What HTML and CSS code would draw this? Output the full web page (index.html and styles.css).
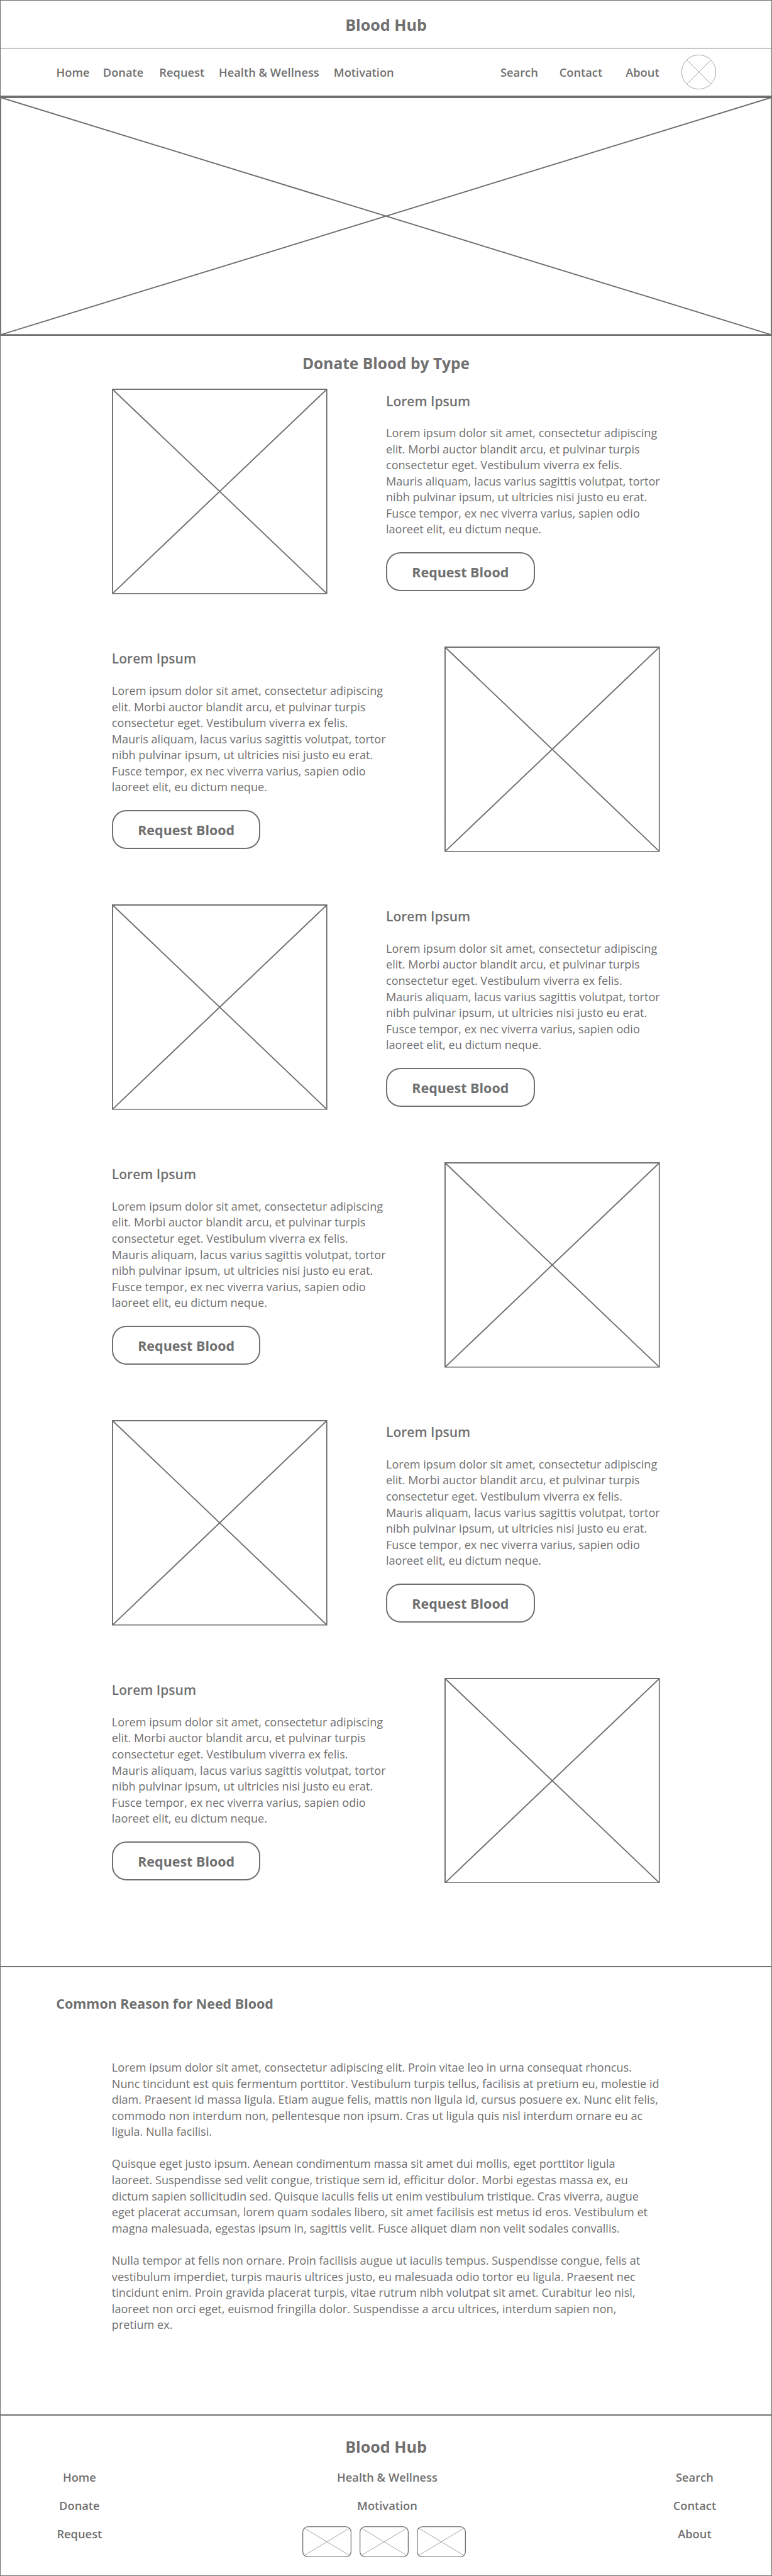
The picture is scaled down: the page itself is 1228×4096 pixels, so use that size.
FILE: index.html
```html
<!DOCTYPE html>
<html lang="en">
<head>
<meta charset="utf-8">
<title>Blood Hub</title>
<link rel="stylesheet" href="styles.css">
</head>
<body>
<svg class="defs" aria-hidden="true">
  <symbol id="picture" viewBox="0 0 536 511">
    <path d="M1.5 1.5H534.5V509.5H1.5ZL534.5 509.5M534.5 1.5L1.5 509.5" fill="none" stroke="#707070" stroke-width="3"/>
  </symbol>
  <symbol id="tile" viewBox="0 0 122 77">
    <rect x="1" y="1" width="120" height="75" rx="13" fill="none" stroke="#707070" stroke-width="2"/>
    <path d="M4.500 4.500L117.500 72.500M117.500 4.500L4.500 72.500" fill="none" stroke="#707070" stroke-width="1"/>
  </symbol>
</svg>
<div class="page">
  <header class="brand-bar"><h1 class="brand">Blood Hub</h1></header>
  <nav class="nav">
    <a>Home</a><a>Donate</a><a>Request</a><a>Health &amp; Wellness</a><a>Motivation</a><a>Search</a><a>Contact</a><a>About</a>
    <svg class="avatar" viewBox="0 0 86 86"><g fill="none" stroke="#707070" stroke-width="1"><circle cx="43" cy="43" r="42.5"/><path d="M13 13L73 73M73 13L13 73"/></g></svg>
  </nav>
  <svg class="hero" viewBox="0 0 1920 593" preserveAspectRatio="none"><path d="M1.500 1.500H1918.500V591.500H1.500ZL1918.500 591.500M1918.500 1.500L1.500 591.500" fill="none" stroke="#707070" stroke-width="3"/></svg>

  <main class="types">
    <h2 class="types-title">Donate Blood by Type</h2>
    <section class="row">
      <svg class="picture"><use href="#picture"/></svg>
      <div class="copy">
        <h3>Lorem Ipsum</h3>
        <p>Lorem ipsum dolor sit amet, consectetur adipiscing<br>elit. Morbi auctor blandit arcu, et pulvinar turpis<br>consectetur eget. Vestibulum viverra ex felis.<br>Mauris aliquam, lacus varius sagittis volutpat, tortor<br>nibh pulvinar ipsum, ut ultricies nisi justo eu erat.<br>Fusce tempor, ex nec viverra varius, sapien odio<br>laoreet elit, eu dictum neque.</p>
        <a class="button">Request Blood</a>
      </div>
    </section>
    <section class="row flip">
      <svg class="picture"><use href="#picture"/></svg>
      <div class="copy">
        <h3>Lorem Ipsum</h3>
        <p>Lorem ipsum dolor sit amet, consectetur adipiscing<br>elit. Morbi auctor blandit arcu, et pulvinar turpis<br>consectetur eget. Vestibulum viverra ex felis.<br>Mauris aliquam, lacus varius sagittis volutpat, tortor<br>nibh pulvinar ipsum, ut ultricies nisi justo eu erat.<br>Fusce tempor, ex nec viverra varius, sapien odio<br>laoreet elit, eu dictum neque.</p>
        <a class="button">Request Blood</a>
      </div>
    </section>
    <section class="row">
      <svg class="picture"><use href="#picture"/></svg>
      <div class="copy">
        <h3>Lorem Ipsum</h3>
        <p>Lorem ipsum dolor sit amet, consectetur adipiscing<br>elit. Morbi auctor blandit arcu, et pulvinar turpis<br>consectetur eget. Vestibulum viverra ex felis.<br>Mauris aliquam, lacus varius sagittis volutpat, tortor<br>nibh pulvinar ipsum, ut ultricies nisi justo eu erat.<br>Fusce tempor, ex nec viverra varius, sapien odio<br>laoreet elit, eu dictum neque.</p>
        <a class="button">Request Blood</a>
      </div>
    </section>
    <section class="row flip">
      <svg class="picture"><use href="#picture"/></svg>
      <div class="copy">
        <h3>Lorem Ipsum</h3>
        <p>Lorem ipsum dolor sit amet, consectetur adipiscing<br>elit. Morbi auctor blandit arcu, et pulvinar turpis<br>consectetur eget. Vestibulum viverra ex felis.<br>Mauris aliquam, lacus varius sagittis volutpat, tortor<br>nibh pulvinar ipsum, ut ultricies nisi justo eu erat.<br>Fusce tempor, ex nec viverra varius, sapien odio<br>laoreet elit, eu dictum neque.</p>
        <a class="button">Request Blood</a>
      </div>
    </section>
    <section class="row">
      <svg class="picture"><use href="#picture"/></svg>
      <div class="copy">
        <h3>Lorem Ipsum</h3>
        <p>Lorem ipsum dolor sit amet, consectetur adipiscing<br>elit. Morbi auctor blandit arcu, et pulvinar turpis<br>consectetur eget. Vestibulum viverra ex felis.<br>Mauris aliquam, lacus varius sagittis volutpat, tortor<br>nibh pulvinar ipsum, ut ultricies nisi justo eu erat.<br>Fusce tempor, ex nec viverra varius, sapien odio<br>laoreet elit, eu dictum neque.</p>
        <a class="button">Request Blood</a>
      </div>
    </section>
    <section class="row flip">
      <svg class="picture"><use href="#picture"/></svg>
      <div class="copy">
        <h3>Lorem Ipsum</h3>
        <p>Lorem ipsum dolor sit amet, consectetur adipiscing<br>elit. Morbi auctor blandit arcu, et pulvinar turpis<br>consectetur eget. Vestibulum viverra ex felis.<br>Mauris aliquam, lacus varius sagittis volutpat, tortor<br>nibh pulvinar ipsum, ut ultricies nisi justo eu erat.<br>Fusce tempor, ex nec viverra varius, sapien odio<br>laoreet elit, eu dictum neque.</p>
        <a class="button">Request Blood</a>
      </div>
    </section>
  </main>

  <section class="reasons">
    <h2>Common Reason for Need Blood</h2>
    <div class="article">
      <p>Lorem ipsum dolor sit amet, consectetur adipiscing elit. Proin vitae leo in urna consequat rhoncus.<br>Nunc tincidunt est quis fermentum porttitor. Vestibulum turpis tellus, facilisis at pretium eu, molestie id<br>diam. Praesent id massa ligula. Etiam augue felis, mattis non ligula id, cursus posuere ex. Nunc elit felis,<br>commodo non interdum non, pellentesque non ipsum. Cras ut ligula quis nisl interdum ornare eu ac<br>ligula. Nulla facilisi.</p>
      <p>Quisque eget justo ipsum. Aenean condimentum massa sit amet dui mollis, eget porttitor ligula<br>laoreet. Suspendisse sed velit congue, tristique sem id, efficitur dolor. Morbi egestas massa ex, eu<br>dictum sapien sollicitudin sed. Quisque iaculis felis ut enim vestibulum tristique. Cras viverra, augue<br>eget placerat accumsan, lorem quam sodales libero, sit amet facilisis est metus id eros. Vestibulum et<br>magna malesuada, egestas ipsum in, sagittis velit. Fusce aliquet diam non velit sodales convallis.</p>
      <p>Nulla tempor at felis non ornare. Proin facilisis augue ut iaculis tempus. Suspendisse congue, felis at<br>vestibulum imperdiet, turpis mauris ultrices justo, eu malesuada odio tortor eu ligula. Praesent nec<br>tincidunt enim. Proin gravida placerat turpis, vitae rutrum nibh volutpat sit amet. Curabitur leo nisl,<br>laoreet non orci eget, euismod fringilla dolor. Suspendisse a arcu ultrices, interdum sapien non,<br>pretium ex.</p>
    </div>
  </section>

  <footer class="footer">
    <div class="brand">Blood Hub</div>
    <div class="links">
      <div class="links-col"><a>Home</a><a>Donate</a><a>Request</a></div>
      <div class="links-col">
        <a>Health &amp; Wellness</a><a>Motivation</a>
        <div class="tiles">
          <svg class="tile"><use href="#tile"/></svg>
          <svg class="tile"><use href="#tile"/></svg>
          <svg class="tile"><use href="#tile"/></svg>
        </div>
      </div>
      <div class="links-col last"><a>Search</a><a>Contact</a><a>About</a></div>
    </div>
  </footer>
</div>
</body>
</html>
```

FILE: styles.css
```css
/* 1rem is 100 design units; the design is 19.2rem wide */
html { font-size: 63.9583px; }
* { box-sizing: border-box; margin: 0; padding: 0; }
body {
  background: #fff;
  color: #707070;
  font-family: "Open Sans", "Noto Sans", sans-serif;
  font-size: .283rem;
  line-height: .4rem;
  white-space: nowrap;
}
svg { display: block; }
.defs { width: 0; height: 0; position: absolute; }

.page {
  display: flex;
  flex-direction: column;
  width: 1228px;
  height: 4096px;
  overflow: hidden;
}

.brand { font-size: .393rem; font-weight: 700; text-align: center; line-height: .4rem; }
.brand-bar {
  height: 1.2rem;
  flex: none;
  padding-top: .41rem;
  border: 1px solid #707070;
}

.nav {
  flex: none;
  height: 1.21rem;
  display: grid;
  grid-template-columns: 1.16rem 1.4rem 1.48rem 2.86rem 4.146rem 1.464rem 1.65rem 1.39rem .86rem;
  padding: .395rem 0 0 1.385rem;
  border: solid #707070;
  border-width: 0 1px 2px;
  font-size: .286rem;
  font-weight: 600;
}
.avatar { width: .86rem; height: .86rem; margin-top: -.235rem; }

.hero { flex: none; width: 100%; height: 5.93rem; }

.types {
  flex: none;
  height: 40.54rem;
  padding: .485rem 2.765rem 0 2.765rem;
  border: solid #707070;
  border-width: 1px 1px 0;
}
.types-title { height: .82rem; font-size: .384rem; line-height: .4rem; text-align: center; }

.row { display: flex; justify-content: space-between; height: 6.41rem; }
.flip { flex-direction: row-reverse; }
.picture { width: 5.36rem; height: 5.11rem; }
.copy { width: 6.82rem; padding-top: .12rem; }
.copy h3 { font-size: .329rem; font-weight: 600; line-height: .4rem; margin-bottom: .389rem; }
.button {
  display: block;
  width: 3.7rem;
  height: .97rem;
  margin-top: .361rem;
  padding-top: .265rem;
  border: 2px solid #707070;
  border-radius: .36rem;
  font-size: .336rem;
  font-weight: 700;
  text-align: center;
}

.reasons {
  flex: none;
  height: 11.14rem;
  padding-top: .7rem;
  border: solid #707070;
  border-width: 2px 1px 0;
}
.reasons h2 { margin-left: 1.38rem; font-size: .336rem; line-height: .4rem; }
.article { display: grid; gap: .4rem; margin: 1.195rem 0 0 2.765rem; }

.footer {
  flex: 1;
  padding-top: .58rem;
  border: solid #707070;
  border-width: 2px 1px 1px;
}
.links {
  display: grid;
  grid-template-columns: 3.92rem 11.39rem 3.87rem;
  margin-top: .36rem;
  font-size: .286rem;
  font-weight: 600;
}
.links-col { display: flex; flex-direction: column; align-items: center; gap: .3rem; }
.last { margin-left: .03rem; }
.tiles { display: flex; gap: .2rem; margin: .01rem .15rem 0 0; }
.tile { width: 1.22rem; height: .77rem; }
```
